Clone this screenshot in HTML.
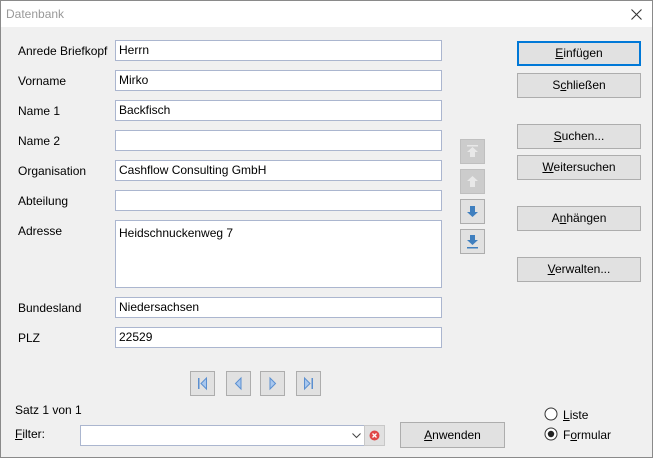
<!DOCTYPE html><html><head><style>
body{margin:0;width:653px;height:458px;overflow:hidden;font-family:"Liberation Sans",sans-serif;font-size:12px;color:#000}
.win{position:absolute;left:0;top:0;width:651px;height:456px;border:1px solid #8a8a8a;background:#f0f0f0}
.title{position:absolute;left:0;top:0;width:651px;height:26px;background:#fff;color:#999;font-size:12px}
.a{position:absolute}
.lbl{position:absolute;left:17px}
.in{position:absolute;left:114px;width:322px;height:19px;background:#fff;border:1px solid #abb6cf;line-height:19px;padding-left:3px;box-sizing:content-box}
.btn{position:absolute;left:516px;width:122px;height:23px;background:#e1e1e1;border:1px solid #adadad;text-align:center;line-height:23px}
.sb{position:absolute;width:23px;height:23px;background:#e1e1e1;border:1px solid #adadad}
.dis{background:#ccc;border-color:#bfbfbf}
u{text-decoration:underline}
</style></head><body><div class="win">
<div class="title"><span class="a" style="left:5px;top:6px">Datenbank</span>
<svg class="a" style="left:630px;top:8px" width="11" height="11"><path d="M0.5 0.5L10.5 10.5M10.5 0.5L0.5 10.5" stroke="#333" stroke-width="1.1"/></svg></div>
<span class="lbl" style="top:43px">Anrede Briefkopf</span><div class="in" style="top:39px">Herrn</div>
<span class="lbl" style="top:73px">Vorname</span><div class="in" style="top:69px">Mirko</div>
<span class="lbl" style="top:103px">Name 1</span><div class="in" style="top:99px">Backfisch</div>
<span class="lbl" style="top:133px">Name 2</span><div class="in" style="top:129px"></div>
<span class="lbl" style="top:163px">Organisation</span><div class="in" style="top:159px">Cashflow Consulting GmbH</div>
<span class="lbl" style="top:193px">Abteilung</span><div class="in" style="top:189px"></div>
<span class="lbl" style="top:223px">Adresse</span><div class="in" style="top:219px;height:66px;line-height:24px">Heidschnuckenweg 7</div>
<span class="lbl" style="top:300px">Bundesland</span><div class="in" style="top:296px">Niedersachsen</div>
<span class="lbl" style="top:330px">PLZ</span><div class="in" style="top:326px">22529</div>

<div class="btn" style="top:40px;border:2px solid #0078d7;height:21px;width:120px;line-height:21px"><u>E</u>infügen</div>
<div class="btn" style="top:72px">S<u>c</u>hließen</div>
<div class="btn" style="top:123px"><u>S</u>uchen...</div>
<div class="btn" style="top:154px"><u>W</u>eitersuchen</div>
<div class="btn" style="top:205px">A<u>n</u>hängen</div>
<div class="btn" style="top:256px"><u>V</u>erwalten...</div>

<div class="sb dis" style="left:459px;top:138px"><svg width="23" height="23"><rect x="6" y="5" width="11" height="1.5" fill="#e8e8e8"/><path d="M11.5 7L17 12H14V17H9V12H6Z" fill="#e8e8e8"/></svg></div>
<div class="sb dis" style="left:459px;top:168px"><svg width="23" height="23"><path d="M11.5 6L17 11H14V17H9V11H6Z" fill="#e8e8e8"/></svg></div>
<div class="sb" style="left:459px;top:198px"><svg width="23" height="23"><path d="M11.5 17L17 12H14V6H9V12H6Z" fill="#3f7fbf"/></svg></div>
<div class="sb" style="left:459px;top:228px"><svg width="23" height="23"><path d="M11.5 15L17 10H14V5H9V10H6Z" fill="#3f7fbf"/><rect x="6" y="17" width="11" height="1.5" fill="#3f7fbf"/></svg></div>

<div class="sb" style="left:189px;top:370px"><svg width="23" height="23"><rect x="7" y="6" width="1.5" height="11" fill="#5b8fd0"/><path d="M15.5 6L10 11.5L15.5 17Z" fill="#a8c7ee" stroke="#5b8fd0"/></svg></div>
<div class="sb" style="left:225px;top:370px"><svg width="23" height="23"><path d="M14 6L8.5 11.5L14 17Z" fill="#a8c7ee" stroke="#5b8fd0"/></svg></div>
<div class="sb" style="left:259px;top:370px"><svg width="23" height="23"><path d="M9 6L14.5 11.5L9 17Z" fill="#a8c7ee" stroke="#5b8fd0"/></svg></div>
<div class="sb" style="left:295px;top:370px"><svg width="23" height="23"><path d="M7.5 6L13 11.5L7.5 17Z" fill="#a8c7ee" stroke="#5b8fd0"/><rect x="14.5" y="6" width="1.5" height="11" fill="#5b8fd0"/></svg></div>

<span class="a" style="left:14px;top:402px">Satz 1 von 1</span>
<span class="a" style="left:14px;top:426px"><u>F</u>ilter:</span>
<div class="a" style="left:79px;top:424px;width:283px;height:19px;background:#fff;border:1px solid #abb6cf"><svg class="a" style="left:271px;top:7px" width="9" height="6"><path d="M0.5 0.5L4.5 4.5L8.5 0.5" stroke="#444" fill="none"/></svg></div>
<div class="a" style="left:363px;top:424px;width:19px;height:19px;background:#e1e1e1;border:1px solid #c8c8c8"><svg width="19" height="19"><circle cx="9.5" cy="9.5" r="5" fill="#e04848"/><path d="M7.5 7.5L11.5 11.5M11.5 7.5L7.5 11.5" stroke="#fff" stroke-width="1.3"/></svg></div>
<div class="a" style="left:399px;top:421px;width:103px;height:24px;background:#e1e1e1;border:1px solid #adadad;text-align:center;line-height:24px"><u>A</u>nwenden</div>

<svg class="a" style="left:543px;top:406px" width="15" height="40"><circle cx="7" cy="7" r="6" fill="#fff" stroke="#333"/><circle cx="7" cy="27" r="6" fill="#fff" stroke="#333"/><circle cx="7" cy="27" r="3.2" fill="#222"/></svg>
<span class="a" style="left:562px;top:407px"><u>L</u>iste</span>
<span class="a" style="left:562px;top:427px">F<u>o</u>rmular</span>
</div></body></html>
